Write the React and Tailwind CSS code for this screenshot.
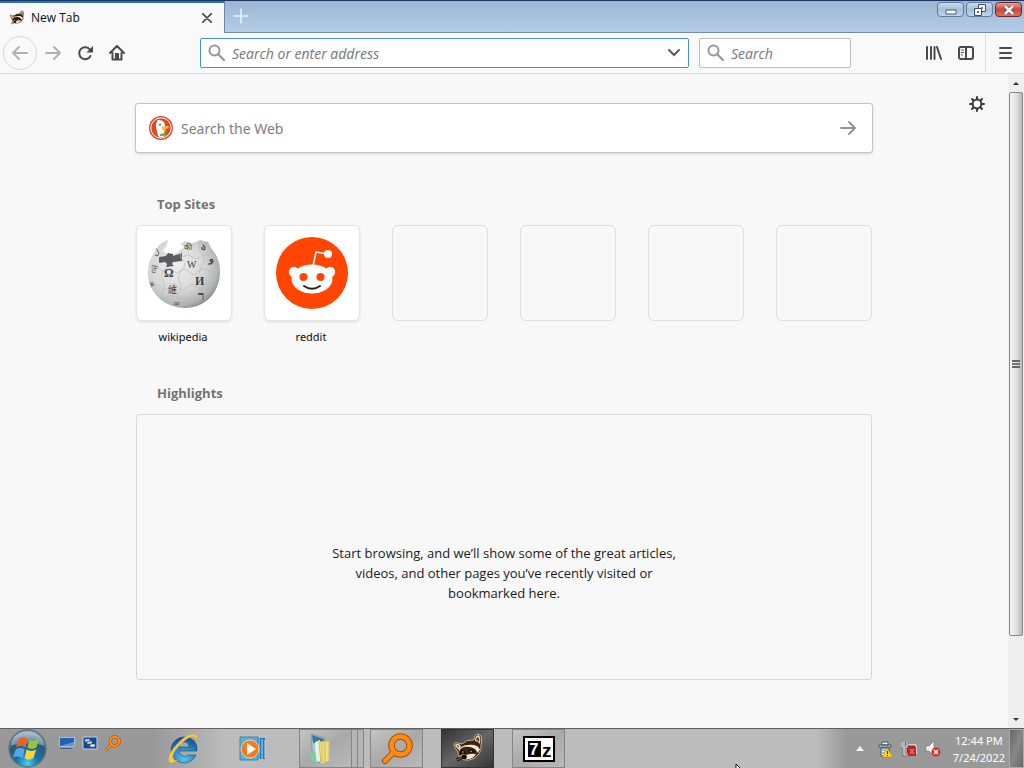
import { useState } from 'react'

const sites = [
  { name: 'wikipedia', icon: <WikipediaIcon /> },
  { name: 'reddit', icon: <RedditIcon /> },
  null,
  null,
  null,
  null,
]

function WikipediaIcon() {
  return (
    <svg viewBox="0 0 72 72" className="size-[72px]" aria-hidden="true">
      <defs>
        <radialGradient id="globe" cx="0.4" cy="0.38" r="0.68">
          <stop offset="0" stopColor="#eeeeee" />
          <stop offset="0.55" stopColor="#d6d7d7" />
          <stop offset="0.85" stopColor="#b0b3b4" />
          <stop offset="1" stopColor="#7d8284" />
        </radialGradient>
      </defs>
      <path
        d="M6 16 L11 8 L17 4 L20 3 L19 8 L15 14 L20 17 L28 16 L32 13 L36 10 L32 7 L37 4 L44 6 L48 5 L52 3 L60 5 L63 11 Q72 21 72 34 C72 56 57 71 37 71 C17 71 0 56 0 36 Q0 24 6 16 Z"
        fill="url(#globe)"
      />
      <path d="M11 20 L18 19 L20 16 L25 17 L25 19 L34 16 L34 24 L25 25 L24 27 L26 29 L18 30 L19 27 L17 25 L11 26 Z" fill="#5a5c5d" />
      <g fill="none" stroke="#b9bbbc" strokeWidth="0.7">
        <path d="M3 29 Q9 27 11 31 Q14 36 17 32 Q22 30 26 34 Q29 38 33 33 Q38 31 42 36 Q47 40 50 34 Q56 30 61 34 L71 33" />
        <path d="M3 49 Q10 45 13 50 Q17 55 22 49 Q27 44 30 50 Q35 56 39 51 Q44 45 49 50 Q54 55 60 49 L69 48" />
        <path d="M34 14 Q30 19 35 23 Q39 28 34 33 Q29 38 31 44 Q35 49 31 55 Q28 60 32 69" />
        <path d="M53 5 Q49 12 54 17 Q58 22 54 29 Q49 36 54 41 Q57 47 53 52 Q49 58 50 66" />
        <path d="M15 34 Q12 40 15 44 Q18 49 14 55 L17 63" />
        <path d="M35 20 Q41 16 44 20 Q48 24 53 19 L66 17 M17 61 Q24 57 29 61 Q37 64 43 60 L58 61" />
      </g>
      <g fill="#3e4142" fontFamily="Liberation Serif, serif">
        <text x="16" y="40" fontSize="12" fontWeight="bold">Ω</text>
        <text x="39" y="31" fontSize="10">W</text>
        <text x="47" y="48" fontSize="12" fontWeight="bold">И</text>
        <text x="20" y="56" fontSize="9" fontFamily="Noto Sans CJK SC, sans-serif">維</text>
        <text x="5" y="18" fontSize="8" transform="rotate(-30 8 14)">ل</text>
        <text x="36" y="13" fontSize="8">की</text>
        <text x="53" y="13" fontSize="9" fontWeight="bold">ა</text>
        <text x="61" y="25" fontSize="10" fontWeight="bold">و</text>
        <text x="50" y="63" fontSize="13" fontWeight="bold">ר</text>
        <text x="2" y="36" fontSize="8" transform="rotate(-70 5 33)">ой</text>
        <text x="2" y="50" fontSize="8" transform="rotate(70 5 47)">ж</text>
        <text x="26" y="68" fontSize="7">ш</text>
      </g>
    </svg>
  )
}

function RedditIcon() {
  return (
    <svg viewBox="0 0 72 72" className="size-[72px]" aria-hidden="true">
      <circle cx="36" cy="36" r="36" fill="#ff4500" />
      <path d="M37 29 L40 15 L51 17" fill="none" stroke="#fff" strokeWidth="1.6" />
      <circle cx="52" cy="17" r="4" fill="#fff" />
      <circle cx="18" cy="35" r="5.2" fill="#fff" />
      <circle cx="54" cy="35" r="5.2" fill="#fff" />
      <ellipse cx="36" cy="42" rx="20.5" ry="14.5" fill="#fff" />
      <circle cx="27.5" cy="40" r="4" fill="#ff4500" />
      <circle cx="44.5" cy="40" r="4" fill="#ff4500" />
      <path d="M28 49 Q36 54.500 44 49" fill="none" stroke="#222" strokeWidth="2" strokeLinecap="round" />
    </svg>
  )
}

function DuckIcon() {
  return (
    <svg viewBox="0 0 24 24" className="size-6 shrink-0" aria-hidden="true">
      <circle cx="12" cy="12" r="12" fill="#d94a2b" />
      <circle cx="12" cy="12" r="10.2" fill="none" stroke="#fff" strokeWidth="1" />
      <path d="M8 6 Q7 4 10 4 Q16 4 16 10 L15 21 Q11 22 9 20 L7 11 Q6 8 8 6 Z" fill="#fff" />
      <path d="M13 11 Q19 9 20 11 Q19 13 15 13 Q18 15 17 15 Q13 15 13 12 Z" fill="#fcbd1c" />
      <path d="M11 18 L15 17 L18 18 L17 20 L11 20 Z" fill="#6bb04a" />
      <circle cx="11" cy="8.7" r="0.9" fill="#2d4f8e" />
    </svg>
  )
}

function Raccoon({ className }) {
  return (
    <svg viewBox="0 0 32 32" className={className} aria-hidden="true">
      <path d="M2 11 Q2 9 6 10 L10 11 Q15 6 22 7 Q22 1 27 1 Q31 4 29 12 Q30 18 26 22 Q20 28 13 27 Q6 25 6 19 Q3 16 2 11 Z" fill="#3b2417" stroke="#e6d3a6" strokeWidth="0.8" />
      <path d="M3 12 Q4 10 7 11 L9 13 L7 17 Q4 15 3 12 Z" fill="#e9d7ac" />
      <path d="M5 12 L7 13 L6 15 Z" fill="#4a3020" />
      <path d="M23 8 Q23 2 27 2 Q29 5 28 11 Q26 8 23 8 Z" fill="#e9d7ac" />
      <path d="M24 7 Q25 4 26 4 Q28 6 27 9 Q26 7 24 7 Z" fill="#4a3020" />
      <path d="M7 19 Q8 15 12 14 Q17 13 21 15 Q25 17 25 20 L28 17 Q27 13 22 12 Q14 11 9 14 Q6 16 7 19 Z" fill="#f2e7c9" />
      <path d="M8 18 Q11 16 13 18 L14 21 Q10 23 8 22 Z M16 17 Q22 15 24 19 Q22 22 17 20 Z" fill="#1e130e" />
      <path d="M8 23 Q10 20 14 22 Q20 20 24 21 Q21 26 16 26 Q10 27 8 23 Z" fill="#f2e7c9" />
      <ellipse cx="12" cy="24" rx="2.8" ry="2.2" fill="#0b0908" />
      <circle cx="11" cy="19" r="0.8" fill="#d9b477" />
      <circle cx="19" cy="18.5" r="0.8" fill="#d9b477" />
      <path d="M4 26 L9 24 M5 28 L10 26" stroke="#17100c" />
    </svg>
  )
}

function SearchIcon() {
  return (
    <svg viewBox="0 0 18 18" className="size-[18px] shrink-0" fill="none" stroke="#979797" strokeWidth="2" aria-hidden="true">
      <circle cx="6.500" cy="6.500" r="5" />
      <path d="M10 10 L16 16" strokeLinecap="round" strokeWidth="2.2" />
    </svg>
  )
}

function LineIcon({ children, className = 'size-4' }) {
  return (
    <svg viewBox="0 0 16 16" className={className} fill="none" stroke="currentColor" strokeWidth="2" strokeLinecap="round" strokeLinejoin="round" aria-hidden="true">
      {children}
    </svg>
  )
}

function GearIcon() {
  return (
    <LineIcon>
      <circle cx="8" cy="8" r="4.4" />
      <path d="M8 1v2M8 13v2M1 8h2M13 8h2M3 3l1.500 1.500M11.500 11.500L13 13M13 3l-1.500 1.500M4.500 11.500L3 13" />
    </LineIcon>
  )
}

function OrangeMagnifier({ className }) {
  return (
    <svg viewBox="0 0 32 32" className={className} fill="none" strokeLinecap="round" aria-hidden="true">
      <path d="M13 19 L4 28" stroke="#a44b00" strokeWidth="6" />
      <circle cx="19.5" cy="12.5" r="9" stroke="#a44b00" strokeWidth="6.5" />
      <path d="M13 19 L4 28" stroke="#ff8b14" strokeWidth="4" />
      <circle cx="19.5" cy="12.5" r="9" stroke="#ff8b14" strokeWidth="4.5" />
    </svg>
  )
}

function StartOrb() {
  return (
    <svg viewBox="0 0 40 40" className="size-[39px]" aria-hidden="true">
      <defs>
        <radialGradient id="orb" cx="0.5" cy="0.9" r="0.85">
          <stop offset="0" stopColor="#3fd2f4" />
          <stop offset="0.35" stopColor="#1673a9" />
          <stop offset="0.7" stopColor="#2b5878" />
          <stop offset="1" stopColor="#8caebc" />
        </radialGradient>
      </defs>
      <circle cx="20" cy="20" r="19" fill="url(#orb)" stroke="#64747a" strokeWidth="1.5" />
      <path d="M3 17 Q5 3 20 3 Q35 3 37 17 Q20 12 3 17 Z" fill="#fff" opacity="0.3" />
      <path d="M11 10 Q15 7 20 10 L18 19 Q13 16 8 19 Z" fill="#ee622a" />
      <path d="M22 11 Q26 14 32 10 L29 19 Q24 22 20 19 Z" fill="#92c83e" />
      <path d="M8 21 Q13 18 17 21 L15 30 Q10 27 5 29 Z" fill="#53a9e7" />
      <path d="M19 21 Q24 24 29 21 L26 30 Q21 33 17 30 Z" fill="#fbd13c" />
    </svg>
  )
}

function DesktopIcon() {
  return (
    <svg viewBox="0 0 16 16" className="size-4" aria-hidden="true">
      <path d="M0 2h16v10H0z" fill="#a8bdd3" />
      <path d="M1 3h14v8H1z" fill="#2460b4" />
      <path d="M1 11 L8 9 L15 7 V11 Z" fill="#5c9cd6" />
      <path d="M1 13h12v1H1z" fill="#45617e" />
    </svg>
  )
}

function SwitcherIcon() {
  return (
    <svg viewBox="0 0 16 16" className="size-4" aria-hidden="true">
      <path d="M1 2h14v12H1z" fill="#174a91" stroke="#bdd0e6" />
      <path d="M3 4h5v3H3zM5 6h5v3H5zM8 9h5v3H8z" fill="#edf4fb" stroke="#174a91" strokeWidth="0.6" />
    </svg>
  )
}

function ExplorerIcon() {
  return (
    <svg viewBox="0 0 32 32" className="size-8" aria-hidden="true">
      <defs>
        <radialGradient id="ie" cx="0.5" cy="0.85" r="0.8">
          <stop offset="0" stopColor="#51c5f4" />
          <stop offset="1" stopColor="#12559a" />
        </radialGradient>
      </defs>
      <path
        d="M17 4 A13 13 0 1 0 29 22 L21 22 Q18 25 14 22 Q12 20 12 18 H30 Q31 5 17 4 Z M12 14 Q13 9 17 9 Q22 9 22 14 Z"
        fill="url(#ie)"
        stroke="#174f82"
        strokeWidth="0.6"
        fillRule="evenodd"
      />
      <path d="M30 2 Q23 -2 12 9 Q-1 22 2 29 Q4 32 11 27 Q6 28 6 25 Q5 20 13 12 Q23 2 27 4 Q30 5 28 9 Q32 4 30 2 Z" fill="#f0cb58" stroke="#bc9027" strokeWidth="0.4" />
    </svg>
  )
}

function MediaIcon() {
  return (
    <svg viewBox="0 0 28 28" className="size-7" aria-hidden="true">
      <path d="M18 3h8v21h-8z" fill="#3278ae" />
      <path d="M20 3v22M23 4v20M26 5v18" stroke="#a9daf2" />
      <path d="M1 2h18v23H1z" fill="#5faed6" stroke="#3987b5" />
      <circle cx="11" cy="14" r="9" fill="#f27b20" stroke="#ffe2c3" strokeWidth="0.8" />
      <path d="M8 8 L17 14 L8 20 Z" fill="#fff" />
    </svg>
  )
}

function FolderIcon() {
  return (
    <svg viewBox="0 0 32 32" className="size-8" aria-hidden="true">
      <path d="M6 1 L20 5 L19 29 L8 30 Z" fill="#a8c9d7" stroke="#7ba0ae" />
      <path d="M7 2 L19 6 L18 11 L8 10 Z" fill="#3f7590" />
      <path d="M10 9 L15 7 V28 L11 29 Z" fill="#e9f1e3" />
      <path d="M5 21 L10 18 L12 30 L7 29 Z" fill="#80cca4" />
      <path d="M14 9 L24 8 V28 L16 31 Z" fill="#f1df83" stroke="#cfbf62" />
      <path d="M17 10v19M20 9v20" stroke="#cdbb60" />
    </svg>
  )
}

function SevenZipIcon() {
  return (
    <svg viewBox="0 0 32 26" className="h-[26px] w-8" aria-hidden="true">
      <path d="M0 0h32v26H0z" fill="#000" />
      <path d="M2 2h28v22H2z" fill="#fff" />
      <path d="M5 5h13v16H5z" fill="#000" />
      <text x="6" y="19" fontSize="17" fontWeight="bold" fontFamily="Liberation Sans, sans-serif" fill="#fff">7</text>
      <text x="19" y="21" fontSize="19" fontWeight="bold" fontFamily="Liberation Sans, sans-serif" fill="#000">z</text>
    </svg>
  )
}

function TrayIcons() {
  return (
    <>
      <svg viewBox="0 0 16 18" className="h-[18px] w-4" aria-hidden="true">
        <path d="M5 2h6v3H5zM2 5h12v2H2zM4 8h8v8H4z" fill="#f2f5f7" stroke="#3d5261" />
        <path d="M5 10h4M5 13h3" stroke="#3d8fc4" />
        <path d="M10 8 L16 17 H5 Z" fill="#ffd51c" stroke="#9a7907" strokeWidth="0.5" />
        <path d="M10 11h1v3h-1zM10 15h1v1h-1z" fill="#342b00" />
      </svg>
      <svg viewBox="0 0 16 18" className="h-[18px] w-4" aria-hidden="true">
        <path d="M5 5h10v9H5z" fill="#7c2323" stroke="#fff" />
        <path d="M1 2v5h5V2M3 1v5M3 7v8h4" fill="none" stroke="#444" strokeWidth="2.5" />
        <path d="M1 2v5h5V2M3 1v5M3 7v8h4" fill="none" stroke="#fff" strokeWidth="1.2" />
        <path d="M7 7h8v9H7z" fill="#c92222" />
        <path d="M9 9l4 5M13 9l-4 5" stroke="#e98b8b" strokeWidth="1.2" />
      </svg>
      <svg viewBox="0 0 16 18" className="h-[18px] w-4" aria-hidden="true">
        <path d="M1 6h3l5-5v15l-5-5H1z" fill="#f5f5f5" stroke="#747474" strokeWidth="0.6" />
        <circle cx="11" cy="12" r="4.6" fill="#d73030" />
        <path d="M9 10l4 4M13 10l-4 4" stroke="#fff" strokeWidth="1.5" />
      </svg>
    </>
  )
}

function TitleBar() {
  const windowButton = 'flex h-[15px] w-[27px] items-center justify-center rounded-sm border border-[#65799a] bg-linear-to-b from-[#cbdcee] via-[#a7bfda] to-[#bfd6ee]'
  return (
    <header className="flex h-[33px] border-t border-[#1c3562] bg-linear-to-b from-[#9bb4d1] to-[#b6cfe9]">
      <div className="flex w-[225px] items-center border-t-2 border-r border-t-[#2374c5] border-r-[#7087a3] bg-[#f9f9fa] pr-3 pl-[9px]">
        <Raccoon className="size-4" />
        <span className="ml-[6px] flex-1 text-xs text-[#0c0c0d]">New Tab</span>
        <button aria-label="Close tab" className="text-[#4a4a4a]">
          <LineIcon className="size-[10px]"><path d="M1 1l14 14M15 1L1 15" strokeWidth="2.5" /></LineIcon>
        </button>
      </div>
      <div className="flex flex-1 items-start border-b border-[#758dab]">
        <button aria-label="Open a new tab" className="flex h-[30px] w-8 items-center justify-center text-[#e8f1fb]">
          <LineIcon><path d="M8 1v14M1 8h14" strokeWidth="1.6" /></LineIcon>
        </button>
        <div className="ml-auto flex gap-[2px] pt-px pr-[2px]">
          <button aria-label="Minimize" className={windowButton}>
            <svg viewBox="0 0 12 10" className="h-[10px] w-3"><path d="M1 5h10v4H1z" fill="#fff" stroke="#4a5870" /></svg>
          </button>
          <button aria-label="Restore" className={windowButton}>
            <svg viewBox="0 0 12 12" className="size-3" fill="#fff" stroke="#3c4a62" fillRule="evenodd">
              <path d="M4.500 0.500h7v7h-7zM7.500 3.500h1v1h-1z" />
              <path d="M0.500 4.500h7v7h-7zM3.500 7.500h1v1h-1z" />
            </svg>
          </button>
          <button aria-label="Close" className="flex h-[15px] w-[27px] items-center justify-center rounded-sm border border-[#6c2630] bg-linear-to-b from-[#e6a094] via-[#cc4632] to-[#d97563]">
            <svg viewBox="0 0 12 10" className="h-[10px] w-3"><path d="M2 1l8 8M10 1L2 9" stroke="#59454b" strokeWidth="4" /><path d="M2 1l8 8M10 1L2 9" stroke="#fff" strokeWidth="2.5" /></svg>
          </button>
        </div>
      </div>
    </header>
  )
}

function ToolBar() {
  const toolButton = 'flex size-8 items-center justify-center text-[#4a4a4b]'
  const field = 'min-w-0 flex-1 pt-[2px] text-sm italic outline-none placeholder:text-[#757575]'
  return (
    <nav className="flex h-[41px] items-center border-b border-[#dcdcdd] bg-[#f9f9fa] pl-[3px]">
      <button aria-label="Back" className="flex size-[34px] items-center justify-center rounded-full border border-[#d5d5d6] text-[#b1b1b2]">
        <LineIcon><path d="M15 8H1M7 2L1 8l6 6" /></LineIcon>
      </button>
      <button aria-label="Forward" className="flex size-8 items-center justify-center text-[#b1b1b2]">
        <LineIcon><path d="M1 8h14M9 2l6 6-6 6" /></LineIcon>
      </button>
      <button aria-label="Reload" className={toolButton}>
        <LineIcon><path d="M13.500 11A6 6 0 1 1 13 4.500" /><path d="M16 1v6.500H9.500z" fill="currentColor" stroke="none" /></LineIcon>
      </button>
      <button aria-label="Home" className={toolButton}>
        <LineIcon><path d="M1 8l7-7 7 7M3.500 8v6.500h9V8" /><path d="M6 8h4v6H6z" fill="currentColor" stroke="none" /></LineIcon>
      </button>
      <label className="ml-[67px] flex h-[30px] flex-1 items-center gap-[6px] rounded-[2px] border border-[#4a90cb] bg-white pr-2 pl-[7px]">
        <SearchIcon />
        <input aria-label="Search or enter address" placeholder="Search or enter address" className={field} />
        <svg viewBox="0 0 12 8" className="h-2 w-3" fill="none" stroke="#5a5a5a" strokeWidth="2" strokeLinecap="round"><path d="M1 1l5 5 5-5" /></svg>
      </label>
      <label className="ml-[10px] flex h-[30px] w-[152px] items-center gap-[6px] rounded-[2px] border border-[#bcbcbd] bg-white pr-2 pl-[7px]">
        <SearchIcon />
        <input aria-label="Search" placeholder="Search" className={field} />
      </label>
      <button aria-label="Library" className="ml-[67px] flex size-8 items-center justify-center text-[#4a4a4b]">
        <LineIcon><path d="M1 2v12M5 2v12M8.500 2v12M11 2l4 12" /></LineIcon>
      </button>
      <button aria-label="Sidebars" className={toolButton}>
        <LineIcon><rect x="1" y="2" width="14" height="12" rx="2" /><path d="M8 2v12" /><path d="M3.500 5h2M3.500 7.500h2M3.500 10h1" strokeWidth="1" /></LineIcon>
      </button>
      <button aria-label="Menu" className="ml-[3px] flex h-[38px] w-[39px] items-center justify-center border-l border-[#dededf] text-[#4a4a4b]">
        <LineIcon><path d="M3 3h11M3 8h11M3 13h11" /></LineIcon>
      </button>
    </nav>
  )
}

function ScrollBar() {
  return (
    <div className="flex w-4 flex-col items-center bg-[#efefef] py-[6px]" aria-hidden="true">
      <svg viewBox="0 0 8 6" className="h-[6px] w-2"><path d="M1 5l3-3 3 3z" fill="#303030" /></svg>
      <div className="mt-[6px] flex w-[14px] flex-[544] flex-col items-center justify-center gap-px rounded-[2px] border border-[#888] bg-linear-to-r from-[#f4f4f4] via-[#e2e2e2] to-[#b9b9b9]">
        <span className="h-[2px] w-2 bg-[#666]" />
        <span className="h-[2px] w-2 bg-[#777]" />
        <span className="h-[2px] w-2 bg-[#666]" />
      </div>
      <div className="flex-[80]" />
      <svg viewBox="0 0 8 6" className="h-[6px] w-2"><path d="M1 2l3 3 3-3z" fill="#303030" /></svg>
    </div>
  )
}

function NewTabPage() {
  const [query, setQuery] = useState('')

  return (
    <div className="flex flex-1 bg-[#f8f8f8]">
      <main className="relative flex-1 px-[135px] pt-[29px] pb-12">
        <button aria-label="Settings" className="absolute top-[22px] right-[23px] text-[#3b3b3c]">
          <GearIcon />
        </button>
        <form className="mx-auto flex h-[50px] max-w-[738px] items-center gap-2 rounded-[3px] border border-[#c3c3c3] bg-white pr-4 pl-[13px] shadow-sm" onSubmit={e => e.preventDefault()}>
          <DuckIcon />
          <input
            aria-label="Search the Web"
            placeholder="Search the Web"
            value={query}
            onChange={e => setQuery(e.target.value)}
            className="min-w-0 flex-1 pt-px font-['Noto_Sans','Open_Sans',sans-serif] text-sm outline-none placeholder:text-[#7d7d7e]"
          />
          <button aria-label="Submit search" className="text-[#929293]">
            <LineIcon><path d="M1 8h14M9 2l6 6-6 6" strokeWidth="1.8" /></LineIcon>
          </button>
        </form>

        <section className="mx-auto mt-10 max-w-[736px]">
          <h2 className="pl-[21px] text-[13px] leading-[22px] font-bold text-[#737373]">Top Sites</h2>
          <ul className="mt-[10px] flex justify-between">
            {sites.map((site, i) => (
              <li key={i} className="w-24">
                {site ? (
                  <a href={`#${site.name}`} className="block text-center">
                    <span className="flex h-24 items-center justify-center rounded-md border border-[#e5e5e5] bg-white shadow-sm">
                      {site.icon}
                    </span>
                    <span className="mt-1 block pr-[2px] font-['Noto_Sans','Open_Sans',sans-serif] text-[11px] leading-6 text-[#0c0c0d]">{site.name}</span>
                  </a>
                ) : (
                  <div className="h-24 rounded-md border border-[#dededf]" />
                )}
              </li>
            ))}
          </ul>
        </section>

        <section className="mx-auto mt-[33px] max-w-[736px]">
          <h2 className="pl-[21px] text-[13px] leading-[22px] font-bold text-[#737373]">Highlights</h2>
          <div className="mt-[10px] flex min-h-[266px] justify-center rounded-[3px] border border-[#d9d9da] px-6 pt-32">
            <p className="max-w-[350px] text-center text-[13px] leading-5 text-[#1a1a1b]">
              Start browsing, and we’ll show some of the great articles, videos, and other pages you’ve recently visited or bookmarked here.
            </p>
          </div>
        </section>
      </main>
      <ScrollBar />
    </div>
  )
}

function TaskBar() {
  const taskButton = 'flex h-[39px] w-[53px] items-center justify-center border border-[#858585] bg-linear-to-br from-[#c5c5c5] via-[#a9a9a9] to-[#bababa]'
  return (
    <footer className="flex h-10 items-center border-t border-[#606060] bg-linear-to-r from-[#999] from-15% via-[#bcbcbc] via-22% to-[#bcbcbc]">
      <button aria-label="Start" className="ml-2"><StartOrb /></button>
      <div className="ml-3 flex gap-[7px] pb-3">
        <button aria-label="Show desktop"><DesktopIcon /></button>
        <button aria-label="Switch windows"><SwitcherIcon /></button>
        <button aria-label="Everything"><OrangeMagnifier className="size-4" /></button>
      </div>
      <button aria-label="Internet Explorer" className="ml-[46px]"><ExplorerIcon /></button>
      <button aria-label="Media Player" className="ml-10"><MediaIcon /></button>
      <div className="ml-8 flex">
        <button aria-label="File Explorer" className="flex h-[39px] w-[53px] items-center border border-[#858585] bg-linear-to-br from-[#c5c5c5] via-[#a9a9a9] to-[#bababa] pl-[5px]"><FolderIcon /></button>
        <span className="w-[6px] border border-l-0 border-[#858585] bg-[#b5b5b5]" />
        <span className="w-[6px] border border-l-0 border-[#858585] bg-[#b5b5b5]" />
      </div>
      <button aria-label="Everything search" className={`ml-[6px] ${taskButton}`}><OrangeMagnifier className="size-8" /></button>
      <button aria-label="Browser" className="ml-[18px] flex h-[39px] w-[53px] items-center justify-center border border-[#333] bg-linear-to-br from-[#333] via-[#666] to-[#363636]"><Raccoon className="size-8" /></button>
      <button aria-label="7-Zip" className={`ml-[18px] ${taskButton}`}><SevenZipIcon /></button>

      <div className="ml-auto flex h-full items-center bg-linear-to-r from-transparent to-[#999] to-15% pl-10">
        <button aria-label="Show hidden icons">
          <svg viewBox="0 0 8 5" className="h-[5px] w-2"><path d="M0 5l4-5 4 5z" fill="#f4f4f4" /></svg>
        </button>
        <div className="ml-[13px] flex gap-2"><TrayIcons /></div>
        <time className="ml-3 text-center font-['Noto_Sans','Open_Sans',sans-serif] text-[11px] leading-[17px] text-white">12:44 PM<br />7/24/2022</time>
        <button aria-label="Peek at desktop" className="ml-1 h-full w-[15px] border border-[#aaa] bg-linear-to-br from-[#666] via-[#888] to-[#666]" />
      </div>
    </footer>
  )
}

function App() {
  return (
    <div className="relative flex min-h-screen flex-col overflow-hidden font-['Open_Sans','Noto_Sans',sans-serif]">
      <TitleBar />
      <ToolBar />
      <NewTabPage />
      <TaskBar />
      <svg viewBox="0 0 12 18" className="absolute -bottom-[13px] left-[72%] ml-[-2px] h-[18px] w-3" aria-hidden="true">
        <path d="M1 1v14l3-3 3 5 2-1-3-5h5z" fill="#fff" stroke="#111" />
      </svg>
    </div>
  )
}

export default App
